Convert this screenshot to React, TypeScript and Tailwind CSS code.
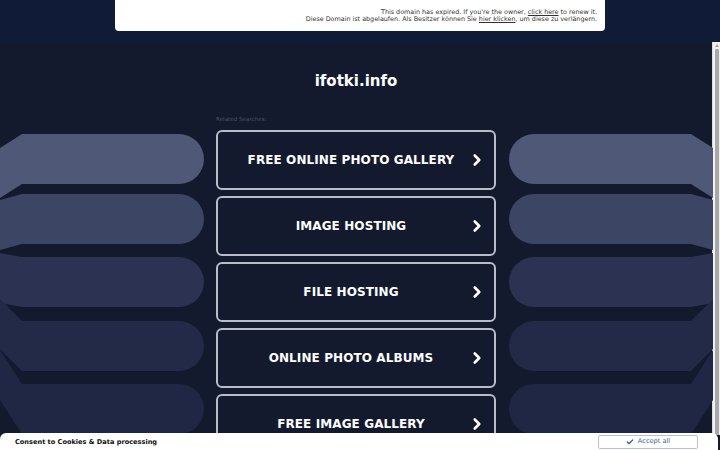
import { ChevronRight, Check } from 'lucide-react';

const searches = [
  'FREE ONLINE PHOTO GALLERY',
  'IMAGE HOSTING',
  'FILE HOSTING',
  'ONLINE PHOTO ALBUMS',
  'FREE IMAGE GALLERY',
];

// decorative pills on the sides: top y, left-end shift, fill
const pills = [
  { y: 4, shift: 14, fill: '#4f5876' },
  { y: 64, shift: 6, fill: '#3d4564' },
  { y: 127, shift: -4, fill: '#2c3352' },
  { y: 191, shift: -22, fill: '#232a48' },
  { y: 254, shift: -34, fill: '#1f2745' },
];

function SidePills({ flip }: { flip?: boolean }) {
  return (
    <svg
      width="204"
      height="330"
      viewBox="0 0 204 330"
      className={flip ? '-scale-x-100 shrink-0' : 'shrink-0'}
    >
      {pills.map((p, i) => {
        const t = p.y;
        const b = p.y + 50;
        return (
          <path
            key={i}
            d={`M 22 ${t} H 179 A 25 25 0 0 1 179 ${b} H 22 L 0 ${b + p.shift} V ${t + p.shift} Z`}
            fill={p.fill}
          />
        );
      })}
    </svg>
  );
}

export default function App() {
  return (
    <div
      className="relative w-[720px] h-[450px] overflow-hidden bg-[#131a2e]"
      style={{ fontFamily: '"DejaVu Sans", Verdana, sans-serif' }}
    >
      {/* Expired notice */}
      <div className="h-[42px] bg-[#101b37] flex justify-center">
        <div className="w-[490px] h-[31px] bg-white rounded-b-[4px] px-2 pt-[9px] text-right text-[6.4px] leading-[7px] text-[#333]">
          <p>
            This domain has expired. If you're the owner,{' '}
            <span className="underline">click here</span> to renew it.
          </p>
          <p>
            Diese Domain ist abgelaufen. Als Besitzer können Sie{' '}
            <span className="underline">hier klicken</span>, um diese zu verlängern.
          </p>
        </div>
      </div>

      <div className="flex h-[408px]">
        <main className="w-[712px] flex flex-col items-center">
          <h1 className="mt-[29px] text-[15px] leading-[20px] font-bold text-white">ifotki.info</h1>

          <div className="w-[280px] mt-[24px] text-[5.6px] leading-[8px] text-[#4b5269]">
            Related Searches:
          </div>

          <div className="flex mt-[7px] w-full">
            <SidePills />
            <div className="ml-[12px] w-[280px] flex flex-col gap-[6px] shrink-0">
              {searches.map((s) => (
                <div
                  key={s}
                  className="h-[60px] border-2 border-[#b9bdc7] rounded-[6px] flex items-center pl-[22px] pr-[8px]"
                >
                  <span className="flex-1 text-center text-[12px] font-bold text-white tracking-[0.1px]">
                    {s}
                  </span>
                  <ChevronRight size={18} strokeWidth={3.5} className="text-white ml-[6px]" />
                </div>
              ))}
            </div>
            <div className="ml-[13px]">
              <SidePills flip />
            </div>
          </div>
        </main>

        {/* scrollbar */}
        <div className="w-[8px] h-[393px] bg-[#f1f1f1] border-l border-[#dcdcdc] flex flex-col items-center pt-[2px]">
          <div className="w-0 h-0 border-x-[2px] border-x-transparent border-b-[3px] border-b-[#a3a3a3]" />
          <div className="mt-[2px] w-[4px] flex-1 bg-[#a8a8a8] rounded-[1px]" />
        </div>
      </div>

      {/* Cookie bar */}
      <div className="absolute left-0 bottom-0 w-[718px] h-[17px] bg-white rounded-t-[6px] flex items-start justify-between pl-[15px] pr-[20px] pt-[5px]">
        <span className="text-[6.6px] leading-[8px] font-bold text-[#111]">
          Consent to Cookies &amp; Data processing
        </span>
        <div className="w-[100px] h-[14px] -mt-[3px] border border-[#b7c0cc] rounded-[2px] flex items-center justify-center gap-[4px] text-[6.6px] text-[#3a5f95]">
          <Check size={8} strokeWidth={4} />
          Accept all
        </div>
      </div>
    </div>
  );
}
